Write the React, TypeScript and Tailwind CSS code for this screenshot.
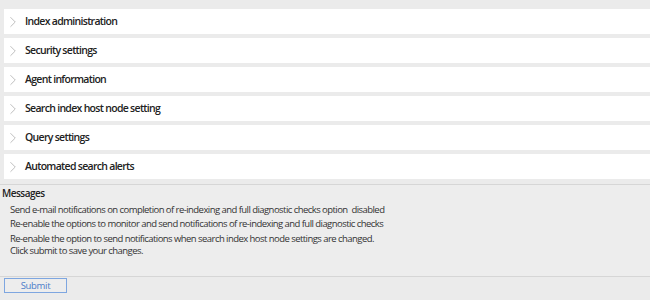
import { ChevronRight } from 'lucide-react';

const SECTIONS = [
  'Index administration',
  'Security settings',
  'Agent information',
  'Search index host node setting',
  'Query settings',
  'Automated search alerts',
];

export default function App() {
  return (
    <div className="flex h-[300px] w-[650px] flex-col bg-[#ebebeb] font-['Open_Sans',sans-serif] text-[#222]">
      <div className="flex flex-col gap-[4px] pl-[4px] pt-[9px]">
        {SECTIONS.map(title => (
          <div key={title} className="flex h-[25px] items-center bg-white">
            <ChevronRight className="h-[18px] w-[18px] shrink-0 text-[#a8a8a8]" strokeWidth={1} />
            <span className="ml-[3px] text-[10.5px] font-semibold tracking-[-0.7px]">{title}</span>
          </div>
        ))}
      </div>

      <div className="mt-[5px] h-[93px] border-y border-[#d6d6d6] bg-[#ededed]">
        <div className="pl-[2px] text-[10px] font-semibold leading-[16px] tracking-[-0.5px]">Messages</div>
        <div className="mt-[2px] pl-[10px] text-[9.5px] leading-[14px] tracking-[-0.55px] text-[#333]">
          <div>Send e-mail notifications on completion of re-indexing and full diagnostic checks option&nbsp; disabled</div>
          <div>Re-enable the options to monitor and send notifications of re-indexing and full diagnostic checks</div>
          <div className="pt-[2px] leading-[12px]">
            Re-enable the option to send notifications when search index host node settings are changed.
            <br />
            Click submit to save your changes.
          </div>
        </div>
      </div>

      <div className="flex pl-[4px] pt-[1px]">
        <button className="block h-[15px] w-[63px] border border-[#7ea6e0] bg-[#ededed] text-[9.5px] leading-[13px] tracking-[-0.3px] text-[#4a7cc9]">
          Submit
        </button>
      </div>
    </div>
  );
}
